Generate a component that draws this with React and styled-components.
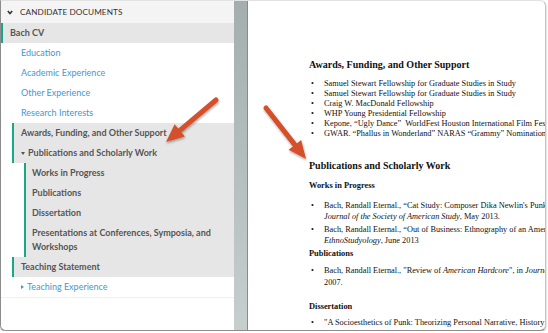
import React from "react";
import styled, { createGlobalStyle } from "styled-components";

const GlobalStyle = createGlobalStyle`
  html, body { margin: 0; padding: 0; background: #ffffff; }
  * { box-sizing: border-box; }
`;

const TEAL = "#1ba68a";
const BLUE = "#4597d0";
const GREY_BG = "#e6e6e6";

// Frame
const Frame = styled.div`
  position: relative;
  width: 546px;
  height: 331px;
  display: flex;
  border: 1px solid #8c8c8c;
  border-top-color: #e2e2e2;
  border-right-color: #c4c4c4;
  border-radius: 0 6px 6px 6px;
  box-shadow: 0 1px 2px rgba(0, 0, 0, 0.35);
  overflow: hidden;
  background: #fff;
`;

// Left nav
const Sidebar = styled.div`
  width: 233px;
  flex: none;
  display: flex;
  flex-direction: column;
  font-family: Lato, "Open Sans", sans-serif;
  font-size: 9px;
  background: #fff;
`;

const Header = styled.div`
  height: 22px;
  flex: none;
  display: flex;
  align-items: center;
  gap: 7px;
  padding-left: 6px;
  background: #f4f4f4;
  color: #333;
  font-size: 8.2px;
  letter-spacing: 0.1px;
  text-transform: uppercase;
`;

const Chevron = () => (
  <svg width="6" height="5" viewBox="0 0 6 5">
    <polyline points="0.8,1 3,3.6 5.2,1" fill="none" stroke="#333" strokeWidth="1.5" />
  </svg>
);

const Row = styled.div`
  display: flex;
  align-items: center;
  gap: 3px;
  padding: 3px 12px 3px ${(p) => p.$pad}px;
  line-height: 14px;
  min-height: 20px;
  color: ${(p) => (p.$link ? BLUE : "#555")};
  font-weight: ${(p) => (p.$link ? 400 : 700)};
`;

const Selected = styled.div`
  margin-left: ${(p) => p.$indent}px;
  border-left: 2px solid ${TEAL};
  background: ${GREY_BG};
`;

const Caret = styled.span`
  width: 0;
  height: 0;
  flex: none;
  border-style: solid;
  ${(p) =>
    p.$down
      ? `border-width: 3px 2.5px 0 2.5px; border-color: #555 transparent transparent transparent;`
      : `border-width: 2.5px 0 2.5px 3px; border-color: transparent transparent transparent ${BLUE};`}
`;

const BottomRule = styled.div`
  border-bottom: 1px solid #f0f0f0;
`;

// Divider between panes
const Splitter = styled.div`
  width: 14px;
  flex: none;
  background: linear-gradient(#a4aeae, #c6cece);
  border-right: 1px solid #858c8c;
`;

// Document
const Doc = styled.div`
  flex: 1;
  overflow: hidden;
  white-space: nowrap;
  padding: 57px 0 0 61px;
  font-family: "Liberation Serif", "Times New Roman", serif;
  color: #111;
  font-size: 8.3px;
`;

const H1 = styled.div`
  font-weight: 700;
  font-size: 10px;
  line-height: 14px;
  margin-top: ${(p) => p.$top || 0}px;
`;

const H2 = styled.div`
  font-weight: 700;
  font-size: 8.4px;
  line-height: 12px;
  margin-top: ${(p) => p.$top || 0}px;
`;

const List = styled.ul`
  list-style: none;
  margin: ${(p) => p.$top}px 0 0 0;
  padding: 0;
  line-height: ${(p) => p.$lh}px;
`;

const Item = styled.li`
  display: flex;
  margin-bottom: ${(p) => p.$gap || 0}px;
  &::before {
    content: "•";
    width: 13px;
    flex: none;
    padding-left: 2px;
    font-size: 8px;
  }
`;

// Arrow overlays
const Overlay = styled.svg`
  position: absolute;
  left: 0;
  top: 0;
  pointer-events: none;
`;

const Arrow = ({ from, to }) => {
  const dx = to[0] - from[0];
  const dy = to[1] - from[1];
  const len = Math.hypot(dx, dy);
  const ux = dx / len;
  const uy = dy / len;
  const nx = -uy;
  const ny = ux;
  const bx = to[0] - 18 * ux;
  const by = to[1] - 18 * uy;
  const pts = [
    [to[0], to[1]],
    [bx + 8 * nx, by + 8 * ny],
    [bx - 8 * nx, by - 8 * ny],
  ]
    .map((p) => p.join(","))
    .join(" ");
  return (
    <g filter="url(#shadow)">
      <line x1={from[0]} y1={from[1]} x2={bx + ux} y2={by + uy} stroke="#d5502b" strokeWidth="5" strokeLinecap="round" />
      <polygon points={pts} fill="#d5502b" />
    </g>
  );
};

const App = () => {
  return (
    <>
      <GlobalStyle />
      <Frame>
        <Sidebar>
          <Header>
            <Chevron />
            Candidate Documents
          </Header>
          <Selected $indent={0}>
            <Row $pad={7}>Bach CV</Row>
          </Selected>
          <Row $link $pad={20}>Education</Row>
          <Row $link $pad={20}>Academic Experience</Row>
          <Row $link $pad={20}>Other Experience</Row>
          <Row $link $pad={20}>Research Interests</Row>
          <Selected $indent={11}>
            <Row $pad={7}>Awards, Funding, and Other Support</Row>
            <Row $pad={7}>
              <Caret $down />
              Publications and Scholarly Work
            </Row>
          </Selected>
          <Selected $indent={23}>
            <Row $pad={6}>Works in Progress</Row>
            <Row $pad={6}>Publications</Row>
            <Row $pad={6}>Dissertation</Row>
            <Row $pad={6}>Presentations at Conferences, Symposia, and Workshops</Row>
          </Selected>
          <Selected $indent={11}>
            <Row $pad={7}>Teaching Statement</Row>
          </Selected>
          <BottomRule>
            <Row $link $pad={20}>
              <Caret />
              Teaching Experience
            </Row>
          </BottomRule>
        </Sidebar>
        <Splitter />
        <Doc>
          <H1>Awards, Funding, and Other Support</H1>
          <List $top={7} $lh={10}>
            <Item>Samuel Stewart Fellowship for Graduate Studies in Study</Item>
            <Item>Samuel Stewart Fellowship for Graduate Studies in Study</Item>
            <Item>Craig W. MacDonald Fellowship</Item>
            <Item>WHP Young Presidential Fellowship</Item>
            <Item>Kepone, “Ugly Dance”&nbsp; WorldFest Houston International Film Festival</Item>
            <Item>GWAR. “Phallus in Wonderland” NARAS “Grammy” Nomination</Item>
          </List>
          <H1 $top={20}>Publications and Scholarly Work</H1>
          <H2 $top={7}>Works in Progress</H2>
          <List $top={8} $lh={11}>
            <Item $gap={2}>
              <div>
                Bach, Randall Eternal., “Cat Study: Composer Dika Newlin's Punk
                <br />
                <i>Journal of the Society of American Study</i>, May 2013.
              </div>
            </Item>
            <Item>
              <div>
                Bach, Randall Eternal., “Out of Business: Ethnography of an American
                <br />
                <i>EthnoStudyology</i>, June 2013
              </div>
            </Item>
          </List>
          <H2 $top={2}>Publications</H2>
          <List $top={5} $lh={12}>
            <Item>
              <div>
                Bach, Randall Eternal., "Review of <i>American Hardcore</i>", in <i>Journal</i>
                <br />
                2007.
              </div>
            </Item>
          </List>
          <H2 $top={12}>Dissertation</H2>
          <List $top={4} $lh={12}>
            <Item>"A Socioesthetics of Punk: Theorizing Personal Narrative, History</Item>
          </List>
        </Doc>
        <Overlay width="546" height="331">
          <defs>
            <filter id="shadow" x="-20%" y="-20%" width="140%" height="140%">
              <feDropShadow dx="0.5" dy="1.5" stdDeviation="1.2" floodColor="#000" floodOpacity="0.35" />
            </filter>
          </defs>
          <Arrow from={[215, 99]} to={[165, 141]} />
          <Arrow from={[265, 107]} to={[305, 158]} />
        </Overlay>
      </Frame>
    </>
  );
};

export default App;
